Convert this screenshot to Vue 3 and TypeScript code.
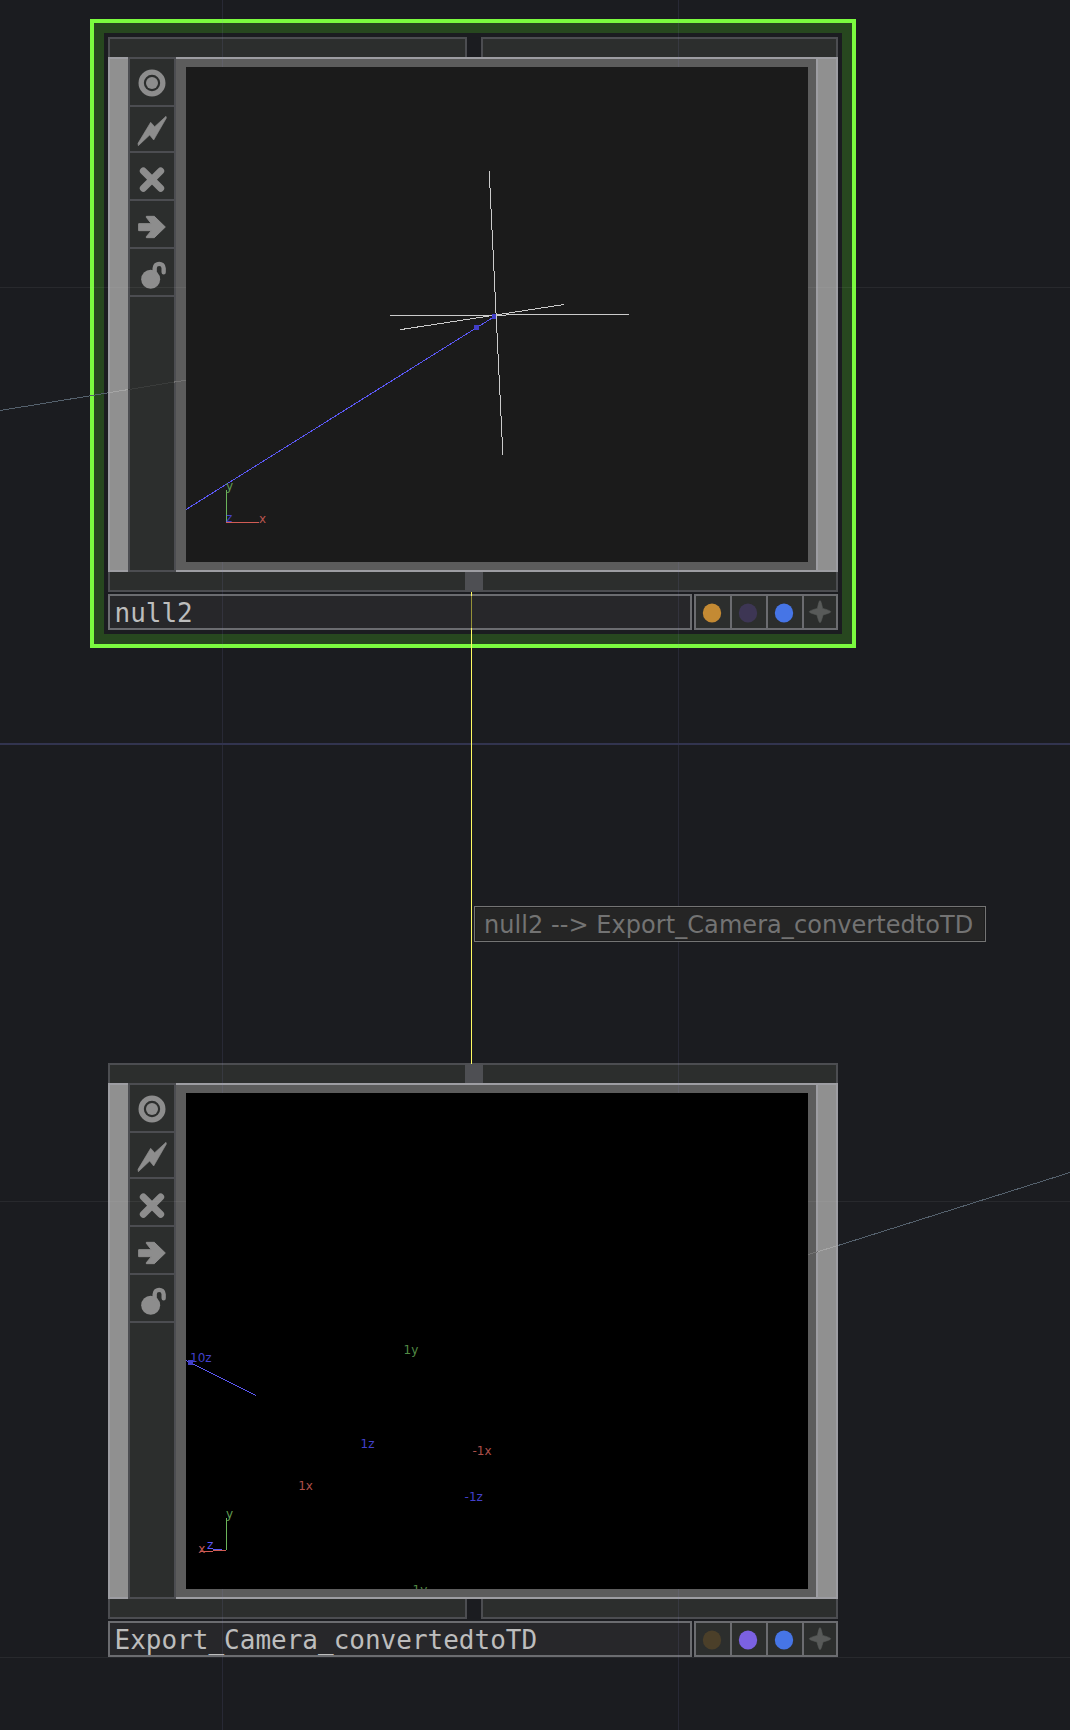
<script setup lang="ts">
interface Label { text: string; x: number; y: number; color: string }
interface Segment { points: string; color: string }
interface Dot { x: number; y: number; w: number; h: number }
interface OpNode {
  name: string
  top: number
  bodyHeight: number
  selected: boolean
  background: string
  wiredInput: boolean
  wiredOutput: boolean
  flags: string[]
  segments: Segment[]
  dots: Dot[]
  labels: Label[]
}

const WHITE = '#cbcbcb'
const BLUE = '#5b58f5'
const GREEN = '#6bb45a'
const RED = '#d15c55'
const blueText = '#4240cc'
const greenText = '#528a45'
const redText = '#ac4f4a'

const tools = [
  { id: 'viewer', box: '150 147 132 138', height: 46 },
  { id: 'cook', box: '150 291 132 132', height: 44 },
  { id: 'bypass', box: '150 429 132 138', height: 46 },
  { id: 'export', box: '150 573 132 138', height: 46 },
  { id: 'lock', box: '150 717 132 138', height: 46 },
]

const nodes: OpNode[] = [
  {
    name: 'null2',
    top: 37,
    bodyHeight: 515,
    selected: true,
    background: '#1b1b1b',
    wiredInput: false,
    wiredOutput: true,
    flags: ['#c48a33', '#3d3654', '#4675e6'],
    segments: [
      { points: '0,442.5 308.5,249.5', color: BLUE },
      { points: '303.2,104.5 316.9,388', color: WHITE },
      { points: '204,248.5 443,247.5', color: WHITE },
      { points: '214,262.7 378,237.5', color: WHITE },
      { points: '40,455.5 73,455.5', color: RED },
      { points: '40.5,423 40.5,455', color: GREEN },
    ],
    dots: [{ x: 288, y: 258, w: 5, h: 5 }, { x: 306, y: 247, w: 4, h: 5 }],
    labels: [
      { text: 'y', x: 40, y: 423, color: '#629c53' },
      { text: 'x', x: 73, y: 456, color: '#b8544e' },
      { text: 'z', x: 40, y: 455, color: blueText },
    ],
  },
  {
    name: 'Export_Camera_convertedtoTD',
    top: 1063,
    bodyHeight: 516,
    selected: false,
    background: '#000000',
    wiredInput: true,
    wiredOutput: false,
    flags: ['#4b3f29', '#7b61e2', '#4675e6'],
    segments: [
      { points: '0,267.5 70,302.5', color: BLUE },
      { points: '22,455.5 40,457.5', color: BLUE },
      { points: '14,458.6 40,457.4', color: RED },
      { points: '40.5,425 40.5,457', color: GREEN },
    ],
    dots: [{ x: 2, y: 267, w: 5, h: 5 }],
    labels: [
      { text: '10z', x: 4, y: 269, color: blueText },
      { text: '1y', x: 217.5, y: 261, color: greenText },
      { text: '1z', x: 174.5, y: 355, color: blueText },
      { text: '-1x', x: 286.5, y: 362, color: redText },
      { text: '1x', x: 112.2, y: 397, color: redText },
      { text: '-1z', x: 278.6, y: 408, color: blueText },
      { text: 'y', x: 40, y: 425, color: '#629c53' },
      { text: 'z', x: 21, y: 455.5, color: BLUE },
      { text: 'x', x: 12.3, y: 460, color: '#c25751' },
      { text: '1y', x: 226.5, y: 501, color: greenText },
    ],
  },
]
</script>

<template>
  <main class="network">
    <div class="selection"></div>

    <section
      v-for="node in nodes"
      :key="node.name"
      class="node"
      :style="{ top: node.top + 'px' }"
    >
      <div class="rail rail-top" :class="{ joined: node.wiredInput }">
        <div class="bar"></div>
        <div class="plug"></div>
        <div class="bar"></div>
      </div>

      <div class="body" :style="{ height: node.bodyHeight + 'px' }">
        <div class="side side-left"></div>
        <div class="tools">
          <div v-for="tool in tools" :key="tool.id" class="tool">
            <svg :viewBox="tool.box" width="44" :height="tool.height">
              <g v-if="tool.id === 'viewer'">
                <circle cx="216" cy="219" r="32.5" fill="none" stroke="#8d8d8d" stroke-width="16" />
                <circle cx="216" cy="219" r="18" fill="#8d8d8d" />
              </g>
              <path
                v-else-if="tool.id === 'cook'"
                fill="#8d8d8d"
                stroke="#8d8d8d"
                stroke-width="2"
                stroke-linejoin="round"
                d="M258 319 L224 350 L212 337 L174 400 L175 407 L209 375 L221 390 L259 324Z"
              />
              <path
                v-else-if="tool.id === 'bypass'"
                fill="none"
                stroke="#8d8d8d"
                stroke-width="21"
                stroke-linecap="round"
                d="M190 483 L242 535 M242 483 L190 535"
              />
              <path
                v-else-if="tool.id === 'export'"
                fill="#8d8d8d"
                stroke="#8d8d8d"
                stroke-width="3"
                stroke-linejoin="round"
                d="M176 641H214L199 622V619H223L256 651L223 683H199V680L214 662H176Z"
              />
              <g v-else>
                <circle cx="212" cy="808" r="28.5" fill="#8d8d8d" />
                <path
                  fill="none"
                  stroke="#8d8d8d"
                  stroke-width="13"
                  stroke-linecap="round"
                  d="M224 792V775C224 757 251 757 251 775V787"
                />
              </g>
            </svg>
          </div>
        </div>
        <div class="frame">
          <svg class="viewer" width="622" :height="node.bodyHeight - 20" :style="{ background: node.background }">
            <g shape-rendering="crispEdges" fill="none">
              <polyline v-for="(s, i) in node.segments" :key="i" :points="s.points" :stroke="s.color" />
            </g>
            <rect
              v-for="(d, i) in node.dots"
              :key="'d' + i"
              :x="d.x"
              :y="d.y"
              :width="d.w"
              :height="d.h"
              fill="#413ec8"
            />
            <text v-for="(l, i) in node.labels" :key="'l' + i" :x="l.x" :y="l.y" :fill="l.color">{{ l.text }}</text>
          </svg>
        </div>
        <div class="side side-right"></div>
      </div>

      <div class="rail rail-bottom" :class="{ joined: node.wiredOutput }">
        <div class="bar"></div>
        <div class="plug"></div>
        <div class="bar"></div>
      </div>

      <footer class="foot">
        <div class="name">{{ node.name }}</div>
        <div class="flags">
          <div v-for="(color, i) in node.flags" :key="i" class="flag">
            <svg width="34" height="32"><ellipse cx="16" cy="17" rx="9.2" ry="9.6" :fill="color" /></svg>
          </div>
          <div class="flag star">
            <svg width="32" height="32">
              <path
                fill="#585a59"
                stroke="#585a59"
                stroke-width="0.6"
                d="M16 4.5Q17 4.5 18.6 12.4Q26.500 14.500 26.800 15.800Q26.500 17 19 19Q17.200 26.500 16 26.700Q14.800 26.500 13 19Q5.500 17 5.200 15.800Q5.500 14.500 13.400 12.400Q15 4.500 16 4.500Z"
              />
            </svg>
          </div>
        </div>
      </footer>
    </section>

    <svg class="wires" width="1070" height="1730" shape-rendering="crispEdges">
      <g fill="#8f8fd0" fill-opacity="0.12">
        <rect x="222" y="0" width="1" height="1730" />
        <rect x="678" y="0" width="1" height="1730" />
      </g>
      <rect x="0" y="743" width="1070" height="2" fill="#32344f" />
      <g fill="#c8c8d0" fill-opacity="0.08">
        <rect x="0" y="287" width="1070" height="1" />
        <rect x="0" y="1201" width="1070" height="1" />
        <rect x="0" y="1657" width="1070" height="1" />
      </g>
      <g fill="none">
        <path d="M0 410.500L108 392.900M838 1245.500L1070 1172.500" stroke="#55616d" />
        <path d="M108 392.900L128 389.600M818 1251.600L838 1245.500" stroke="#a5a5a5" />
        <path d="M128 389.600L174 382.100" stroke="#3a3c3b" />
        <path d="M174 382.100L186 380.200M808 1254.600L818 1251.600" stroke="#727272" />
      </g>
      <rect x="471" y="592" width="1" height="472" fill="#fffb62" />
      <rect x="471" y="596" width="1" height="32" fill="#949038" />
    </svg>

    <div class="tip">null2 --&gt; Export_Camera_convertedtoTD</div>
  </main>
</template>

<style>
body {
  margin: 0;
  background: #1b1c20;
}
</style>

<style scoped>
.network {
  position: relative;
  width: 1070px;
  height: 1730px;
  overflow: hidden;
  background: #1b1c20;
}
svg {
  display: block;
}
.selection {
  position: absolute;
  left: 90px;
  top: 19px;
  box-sizing: border-box;
  width: 766px;
  height: 629px;
  border: 4px solid #7bfb3f;
  box-shadow: inset 0 0 0 10px #27471f;
}
.node {
  position: absolute;
  left: 108px;
  width: 730px;
}
.rail {
  display: flex;
  height: 20px;
}
.bar {
  box-sizing: border-box;
  background: #2c2e2d;
  border: 2px solid #4c4d51;
}
.bar:first-child {
  width: 359px;
}
.bar:last-child {
  width: 357px;
}
.rail-top .bar {
  border-bottom: 0;
}
.rail-bottom .bar {
  border-top: 0;
}
.plug {
  width: 14px;
}
.joined .plug {
  width: 18px;
  background: #4e4f53;
}
.joined .bar:first-child {
  width: 357px;
  border-right: 0;
}
.joined .bar:last-child {
  width: 355px;
  border-left: 0;
}
.body {
  display: flex;
}
.side {
  box-sizing: border-box;
  background: #909090;
  border: 2px solid #9d9da2;
}
.side-left {
  width: 20px;
  border-right: 0;
}
.side-right {
  width: 22px;
}
.tools {
  box-sizing: border-box;
  width: 48px;
  background: #2c2e2d;
  border: 2px solid #4c4d51;
}
.tool {
  border-bottom: 2px solid #4c4d51;
}
.frame {
  box-sizing: border-box;
  width: 640px;
  padding: 8px 8px 8px 10px;
  background: #5c5c5c;
  border-top: 2px solid #9d9da2;
  border-bottom: 2px solid #9d9da2;
}
.viewer {
  position: relative;
  z-index: 3;
  overflow: hidden;
}
.viewer text {
  font: 12px "DejaVu Sans", sans-serif;
}
.foot {
  display: flex;
  gap: 2px;
  margin-top: 2px;
}
.name {
  box-sizing: border-box;
  width: 584px;
  height: 36px;
  padding-left: 4.5px;
  border: 2px solid #6b6c70;
  background: #27272a;
  color: #bdbdbd;
  font: 26px/35px "DejaVu Sans Mono", monospace;
  white-space: pre;
}
.flags {
  box-sizing: border-box;
  display: flex;
  width: 144px;
  height: 36px;
  border: 2px solid #6b6c70;
  background: #2c2e2d;
}
.flag {
  box-sizing: border-box;
  width: 36px;
  border-right: 2px solid #6b6c70;
}
.star {
  width: 32px;
  border-right: 0;
}
.wires {
  position: absolute;
  inset: 0;
  z-index: 2;
}
.tip {
  position: absolute;
  left: 474px;
  top: 906px;
  z-index: 4;
  box-sizing: border-box;
  width: 512px;
  height: 36px;
  padding-left: 9px;
  border: 1px solid #747474;
  background: #252525;
  box-shadow: inset 0 0 0 1px #1d1d1e;
  color: #737373;
  font: 24px/36px "DejaVu Sans", sans-serif;
  letter-spacing: 0.06px;
  white-space: nowrap;
}
</style>
